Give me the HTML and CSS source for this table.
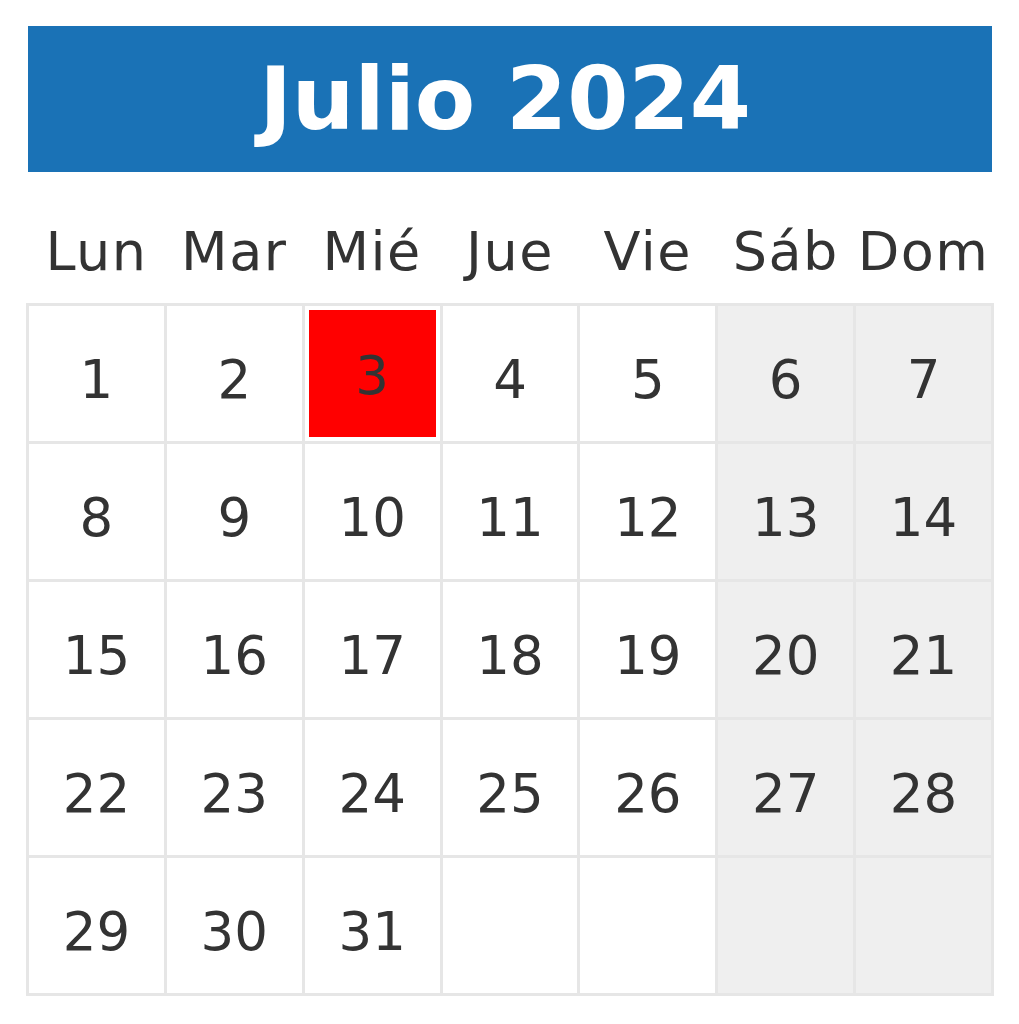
FILE: index.html
```html
<!DOCTYPE html>
<html lang="es">
<head>
<meta charset="utf-8">
<title>Julio 2024</title>
<link rel="stylesheet" href="styles.css">
</head>
<body>
<div class="calendar">
  <header class="title">Julio 2024</header>
  <div class="weekdays">
    <div>Lun</div><div>Mar</div><div>Mié</div><div>Jue</div><div>Vie</div><div>Sáb</div><div>Dom</div>
  </div>
  <div class="grid">
    <div class="cell">1</div><div class="cell">2</div><div class="cell today">3</div><div class="cell">4</div><div class="cell">5</div><div class="cell we">6</div><div class="cell we">7</div>
    <div class="cell">8</div><div class="cell">9</div><div class="cell">10</div><div class="cell">11</div><div class="cell">12</div><div class="cell we">13</div><div class="cell we">14</div>
    <div class="cell">15</div><div class="cell">16</div><div class="cell">17</div><div class="cell">18</div><div class="cell">19</div><div class="cell we">20</div><div class="cell we">21</div>
    <div class="cell">22</div><div class="cell">23</div><div class="cell">24</div><div class="cell">25</div><div class="cell">26</div><div class="cell we">27</div><div class="cell we">28</div>
    <div class="cell">29</div><div class="cell">30</div><div class="cell">31</div><div class="cell"></div><div class="cell"></div><div class="cell we"></div><div class="cell we"></div>
  </div>
</div>
</body>
</html>
```

FILE: styles.css
```css
html, body {
  margin: 0;
  padding: 0;
  background: #fff;
}
body {
  font-family: "DejaVu Sans", "Liberation Sans", sans-serif;
  color: #333;
}
.calendar {
  width: 968px;
  margin: 0 0 0 26px;
  padding-top: 26px;
}
.title {
  margin: 0 2px 0 2px;
  height: 146px;
  background: #1a72b6;
  color: #fff;
  font-weight: bold;
  font-size: 88px;
  display: flex;
  align-items: center;
  justify-content: center;
  padding-right: 10px;
  line-height: 1;
}
.weekdays {
  height: 131px;
  box-sizing: border-box;
  padding: 28px 3px 0 3px;
  display: grid;
  grid-template-columns: repeat(7, 1fr);
  column-gap: 3px;
  align-items: center;
  font-size: 54px;
  letter-spacing: 1.5px;
  line-height: 1;
  text-align: center;
  white-space: nowrap;
}
.grid {
  display: grid;
  grid-template-columns: repeat(7, 1fr);
  grid-auto-rows: 135px;
  gap: 3px;
  padding: 3px;
  background: #e6e6e6;
}
.cell {
  background: #fff;
  display: flex;
  align-items: center;
  justify-content: center;
  box-sizing: border-box;
  padding-top: 12px;
  font-size: 53px;
  line-height: 1;
}
.cell.we {
  background: #efefef;
}
.cell.today {
  background: #ff0000;
  border: 4px solid #fff;
  padding-top: 4px;
}
```
